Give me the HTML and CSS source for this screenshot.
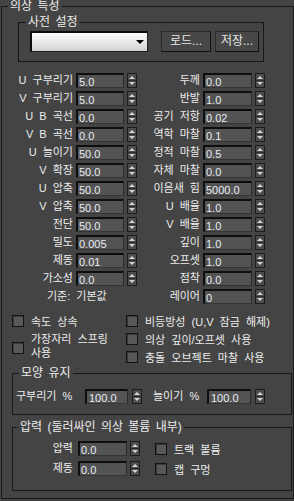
FILE: index.html
```html
<!DOCTYPE html>
<html lang="ko">
<head>
<meta charset="utf-8">
<title>의상 특성</title>
<link rel="stylesheet" href="styles.css">
</head>
<body>
<div class="group outer">
  <div class="gtitle">의상 특성</div>

  <div class="group presets">
    <div class="gtitle">사전 설정</div>
    <div class="preset-row">
      <div class="combo"><span class="arrow"></span></div>
      <button class="btn load">로드...</button>
      <button class="btn save">저장...</button>
    </div>
  </div>

  <div class="params">
    <div class="lbl">U 구부리기</div><div class="field">5.0</div><div class="spin"></div>
    <div class="lbl">두께</div><div class="field">0.0</div><div class="spin"></div>

    <div class="lbl">V 구부리기</div><div class="field">5.0</div><div class="spin"></div>
    <div class="lbl">반발</div><div class="field">1.0</div><div class="spin"></div>

    <div class="lbl">U B 곡선</div><div class="field">0.0</div><div class="spin"></div>
    <div class="lbl">공기 저항</div><div class="field">0.02</div><div class="spin"></div>

    <div class="lbl">V B 곡선</div><div class="field">0.0</div><div class="spin"></div>
    <div class="lbl">역학 마찰</div><div class="field">0.1</div><div class="spin"></div>

    <div class="lbl">U 늘이기</div><div class="field">50.0</div><div class="spin"></div>
    <div class="lbl">정적 마찰</div><div class="field">0.5</div><div class="spin"></div>

    <div class="lbl">V 확장</div><div class="field">50.0</div><div class="spin"></div>
    <div class="lbl">자체 마찰</div><div class="field">0.0</div><div class="spin"></div>

    <div class="lbl">U 압축</div><div class="field">50.0</div><div class="spin"></div>
    <div class="lbl">이음새 힘</div><div class="field">5000.0</div><div class="spin"></div>

    <div class="lbl">V 압축</div><div class="field">50.0</div><div class="spin"></div>
    <div class="lbl">U 배율</div><div class="field">1.0</div><div class="spin"></div>

    <div class="lbl">전단</div><div class="field">50.0</div><div class="spin"></div>
    <div class="lbl">V 배율</div><div class="field">1.0</div><div class="spin"></div>

    <div class="lbl">밀도</div><div class="field">0.005</div><div class="spin"></div>
    <div class="lbl">깊이</div><div class="field">1.0</div><div class="spin"></div>

    <div class="lbl">제동</div><div class="field">0.01</div><div class="spin"></div>
    <div class="lbl">오프셋</div><div class="field">1.0</div><div class="spin"></div>

    <div class="lbl">가소성</div><div class="field">0.0</div><div class="spin"></div>
    <div class="lbl">점착</div><div class="field">0.0</div><div class="spin"></div>

    <div class="lbl base">기준: 기본값</div>
    <div class="lbl">레이어</div><div class="field">0</div><div class="spin"></div>
  </div>

  <div class="checks">
    <div class="chk c-inherit"><span class="box"></span><span>속도 상속</span></div>
    <div class="chk c-aniso"><span class="box"></span><span>비등방성 (U,V 잠금 해제)</span></div>
    <div class="chk c-edge"><span class="box"></span><span class="two">가장자리 스프링<br>사용</span></div>
    <div class="chk c-depth"><span class="box"></span><span>의상 깊이/오프셋 사용</span></div>
    <div class="chk c-fric"><span class="box"></span><span>충돌 오브젝트 마찰 사용</span></div>
  </div>

  <div class="group shape">
    <div class="gtitle">모양 유지</div>
    <div class="shape-row">
      <div class="lbl s-l1">구부리기 %</div>
      <div class="field s-f1">100.0</div>
      <div class="spin s-sp"></div>
      <div class="lbl s-l2">늘이기 %</div>
      <div class="field s-f2">100.0</div>
      <div class="spin s-sp"></div>
    </div>
  </div>

  <div class="group pressure">
    <div class="gtitle">압력 (둘러싸인 의상 볼륨 내부)</div>
    <div class="p-grid">
      <div class="lbl">압력</div><div class="field">0.0</div><div class="spin"></div>
      <div class="chk"><span class="box"></span><span>트랙 볼륨</span></div>
      <div class="lbl">제동</div><div class="field">0.0</div><div class="spin"></div>
      <div class="chk"><span class="box"></span><span>캡 구멍</span></div>
    </div>
  </div>
</div>
</body>
</html>
```

FILE: styles.css
```css
html, body {
  margin: 0;
  padding: 0;
  background: #444444;
  overflow: hidden;
}

body {
  width: 294px;
  height: 501px;
  font-family: "Liberation Sans", "Noto Sans CJK KR", sans-serif;
  font-size: 11px;
  color: #ececec;
  word-spacing: 3px;
  padding-top: 6px;
  box-sizing: border-box;
}

.group {
  border: 1px solid #181818;
  box-sizing: border-box;
}

.gtitle {
  width: fit-content;
  margin-top: -7px;
  height: 13px;
  line-height: 13px;
  font-size: 12px;
  padding: 0 2px;
  background: #444444;
  color: #ececec;
  white-space: nowrap;
  word-spacing: 2px;
}

.outer {
  margin-left: 1px;
  width: 293px;
  padding-bottom: 7px;
}

.outer > .gtitle {
  margin-left: 6px;
}

/* presets */
.presets {
  margin: 9px 0 0 16px;
  width: 246px;
  padding-bottom: 9px;
}

.presets > .gtitle {
  margin-left: 7px;
}

.preset-row {
  display: flex;
  margin: 2px 0 0 11px;
  height: 21px;
}

.combo {
  width: 118px;
  height: 21px;
  box-sizing: border-box;
  border-top: 2px solid #0c0c0c;
  border-left: 2px solid #0c0c0c;
  border-right: 1px solid #1e1e1e;
  border-bottom: 1px solid #1e1e1e;
  background: linear-gradient(#fbfbfb, #ececec 40%, #d2d2d2);
  display: flex;
  align-items: center;
  justify-content: flex-end;
  padding-right: 3px;
}

.arrow {
  width: 0;
  height: 0;
  border-left: 4px solid transparent;
  border-right: 4px solid transparent;
  border-top: 4px solid #000;
}

.btn {
  height: 21px;
  box-sizing: border-box;
  padding: 0;
  margin: 0;
  background: #474747;
  border: 1px solid #2a2a2a;
  border-right-color: #111;
  border-bottom-color: #111;
  color: #e6e6e6;
  font-family: inherit;
  font-size: 12px;
  word-spacing: 0;
  line-height: 19px;
  text-align: center;
}

.load {
  width: 50px;
  margin-left: 13px;
}

.save {
  width: 44px;
  margin-left: 4px;
}

/* parameter grid */
.params {
  display: grid;
  grid-template-columns: 71px 48px 10px 60px 49px 10px;
  grid-auto-rows: 15px;
  column-gap: 3px;
  row-gap: 3px;
  margin-top: 11px;
}

.lbl {
  text-align: right;
  line-height: 15px;
  white-space: nowrap;
}

.lbl.base {
  grid-column: 1 / 4;
  text-align: left;
  padding-left: 45px;
}

.field {
  height: 15px;
  box-sizing: border-box;
  border-top: 2px solid #0e0e0e;
  border-left: 2px solid #0e0e0e;
  border-right: 1px solid #2c2c2c;
  border-bottom: 1px solid #363636;
  background: #535353;
  color: #e6ecf4;
  padding: 1px 0 0 1px;
  line-height: 12px;
  font-size: 11px;
  white-space: nowrap;
  overflow: hidden;
  word-spacing: 0;
}

.spin {
  width: 10px;
  height: 15px;
  box-sizing: border-box;
  border: 1px solid #1c1c1c;
  background: linear-gradient(#2a2a2a, #2a2a2a) no-repeat center / 100% 1px, #4d4d4d;
  display: flex;
  flex-direction: column;
  align-items: center;
  justify-content: space-around;
}

.spin::before {
  content: "";
  border-left: 3px solid transparent;
  border-right: 3px solid transparent;
  border-bottom: 3px solid #d4d4d4;
}

.spin::after {
  content: "";
  border-left: 3px solid transparent;
  border-right: 3px solid transparent;
  border-top: 3px solid #d4d4d4;
}

/* checkboxes */
.checks {
  display: grid;
  grid-template-columns: 114px auto;
  grid-template-rows: 18px 18px 18px;
  margin: 8px 0 0 10px;
}

.chk {
  display: flex;
  align-items: center;
  gap: 7px;
  white-space: nowrap;
}

.box {
  flex: none;
  width: 12px;
  height: 12px;
  box-sizing: border-box;
  border: 1px solid #141414;
  background: #585858;
  box-shadow: inset 1px 1px 0 #3a3a3a;
}

.c-inherit { grid-column: 1; grid-row: 1; }
.c-aniso { grid-column: 2; grid-row: 1; }
.c-edge { grid-column: 1; grid-row: 2 / 4; }
.c-depth { grid-column: 2; grid-row: 2; }
.c-fric { grid-column: 2; grid-row: 3; }

.two {
  line-height: 14px;
  margin-top: -4px;
}

/* shape */
.shape {
  margin: 7px 0 0 10px;
  width: 280px;
  padding-bottom: 10px;
}

.shape > .gtitle {
  margin-left: 6px;
}

.shape-row {
  display: flex;
  margin-top: 9px;
  height: 15px;
  padding-left: 3px;
}

.s-l1 {
  width: 69px;
  text-align: left;
}

.s-f1 {
  width: 43px;
  padding-left: 2px;
}

.s-sp {
  margin-left: 4px;
}

.s-l2 {
  width: 54px;
  margin-left: 11px;
  text-align: left;
}

.s-f2 {
  width: 44px;
  padding-left: 2px;
}

/* pressure */
.pressure {
  margin: 12px 0 0 10px;
  width: 280px;
  padding-bottom: 14px;
}

.pressure > .gtitle {
  margin-left: 5px;
}

.p-grid {
  display: grid;
  grid-template-columns: 60px 54px 13px auto;
  grid-auto-rows: 15px;
  row-gap: 5px;
  margin-top: 7px;
}

.p-grid .field {
  margin-left: 5px;
  width: 49px;
}

.p-grid .spin {
  margin-left: 3px;
}

.p-grid .chk {
  margin-left: 15px;
}
```
